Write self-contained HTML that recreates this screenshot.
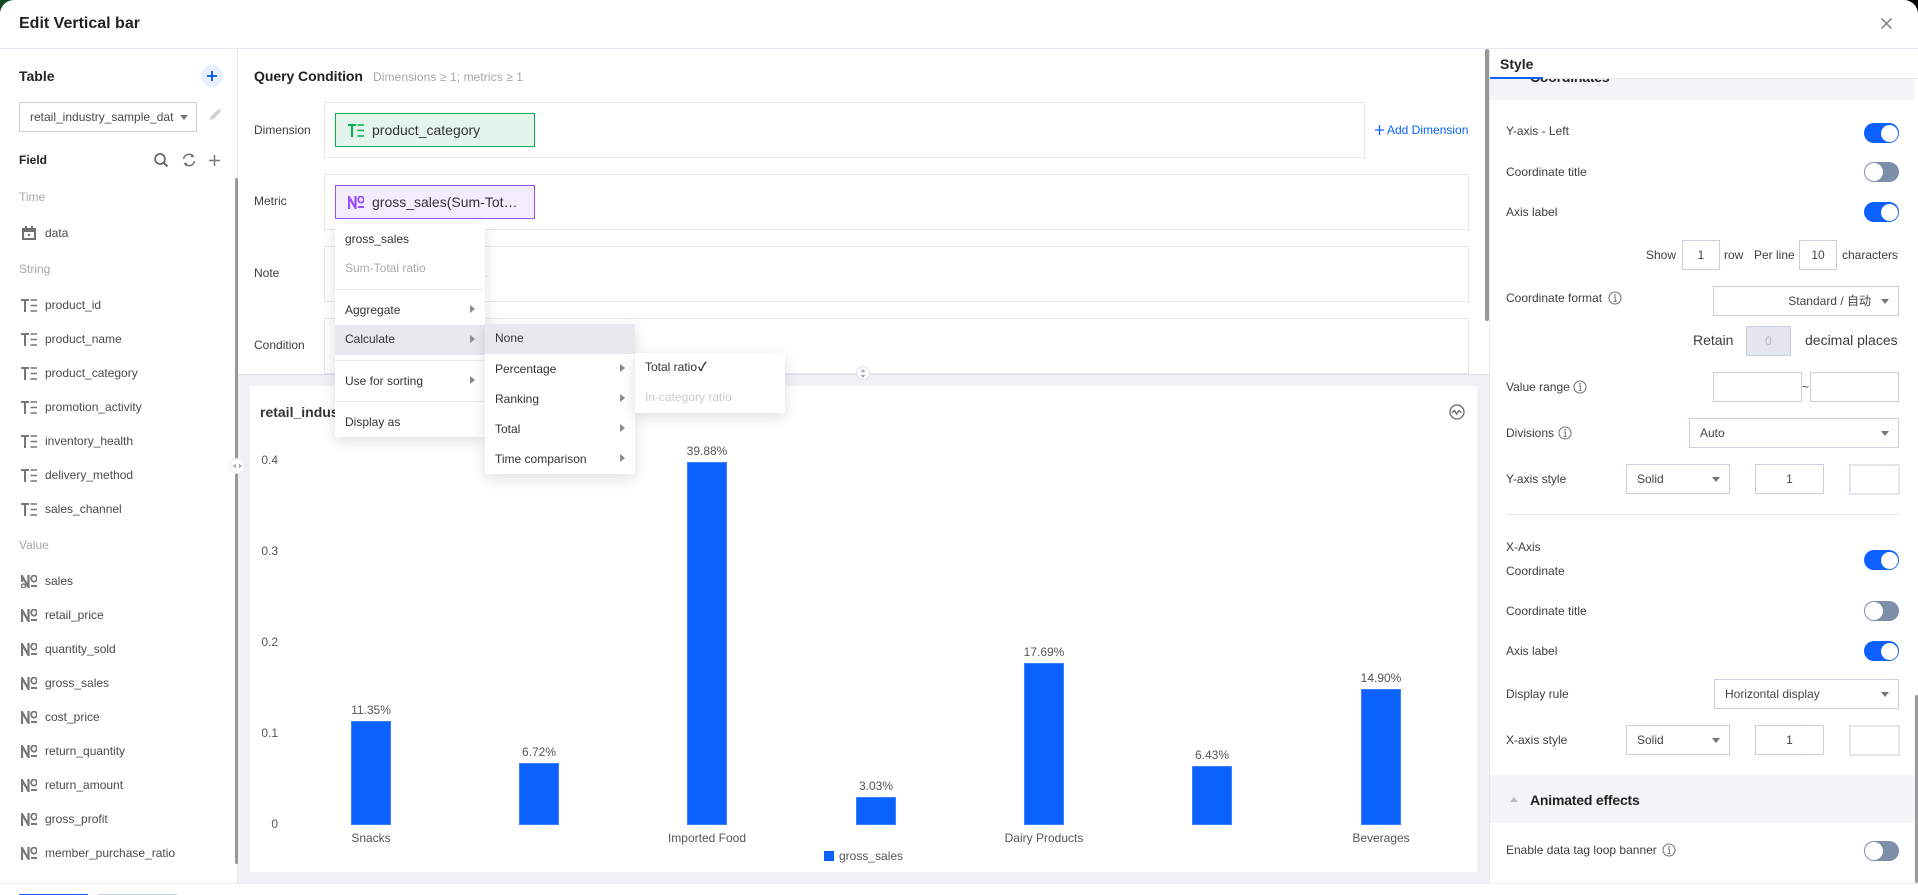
<!DOCTYPE html>
<html lang="en">
<head>
<meta charset="utf-8">
<title>Edit Vertical bar</title>
<style>
html,body{margin:0;padding:0;width:1918px;height:895px;overflow:hidden;background:#fff}
body{position:relative;font-family:"Liberation Sans","Noto Sans CJK SC",sans-serif;font-size:12px;color:#333}
.a{position:absolute;box-sizing:border-box}
.t{position:absolute;white-space:nowrap;line-height:16px;font-size:12px;color:#3d3d3d}
.b{font-weight:700;color:#222}
.g{color:#a8a8a8}
.f{color:#4a4a4a}
.box{position:absolute;box-sizing:border-box;border:1px solid #e6e8ef;background:#fff}
.inp{position:absolute;box-sizing:border-box;border:1px solid #c9cfdc;background:#fff;text-align:center;line-height:28px;font-size:12px;color:#444}
.sel{position:absolute;box-sizing:border-box;border:1px solid #c9cfdc;background:#fff;line-height:28px;font-size:12px;color:#444;padding-left:10px;white-space:nowrap}
.sel:after{content:"";position:absolute;right:9px;top:12px;border-left:4px solid transparent;border-right:4px solid transparent;border-top:5px solid #777}
.cb{position:absolute;box-sizing:border-box;border:2px solid #e4e6ed;background:#fff}
.tg{position:absolute;width:35px;height:20px;border-radius:10px;background:#0b60ff;left:1864px}
.tg:after{content:"";position:absolute;left:17px;top:1.5px;width:17px;height:17px;border-radius:50%;background:#fff}
.tg.off{background:#7d8ea8}
.tg.off:after{left:1px;top:1px;width:18px;height:18px}
.menu{position:absolute;background:#fff;box-shadow:0 4px 14px rgba(0,0,0,.13)}
.mi{position:absolute;left:0;right:0;height:30px;line-height:30px;padding-left:10px;font-size:12px;color:#333;box-sizing:border-box;white-space:nowrap}
.mi.u{line-height:29px}
.mi.h{background:#e7e9ee;line-height:29px}
.mi.ar:after{content:"";position:absolute;right:10px;top:10px;border-top:4px solid transparent;border-bottom:4px solid transparent;border-left:5px solid #8a8a8a}
.ln{position:absolute;left:0;right:0;height:1px;background:#e9ebf1}
.bar{position:absolute;width:40px;background:#0b62ff;box-shadow:inset 0 0 0 1px #3a80ff}
.lb{position:absolute;width:120px;text-align:center;line-height:16px;font-size:12px;color:#555;white-space:nowrap}
.ax{position:absolute;width:30px;text-align:right;left:248px;line-height:16px;font-size:12px;color:#555}
svg{position:absolute;overflow:visible}
</style>
</head>
<body>
<svg width="0" height="0" style="position:absolute">
<defs>
<symbol id="te" viewBox="0 0 16 13"><path d="M0 1h8M4 1v12" fill="none" stroke="currentColor" stroke-width="2"/><path d="M9.500 1h6.500M9.500 6.500h6.500M9.500 12h6.500" fill="none" stroke="currentColor" stroke-width="1.600"/></symbol>
<symbol id="no" viewBox="0 0 16 13"><path d="M1 13V1l6.500 11V0" fill="none" stroke="currentColor" stroke-width="2.200"/><ellipse cx="13" cy="3.600" rx="2.800" ry="3.100" fill="none" stroke="currentColor" stroke-width="1.800"/><path d="M10 11h6" stroke="currentColor" stroke-width="2"/></symbol>
<symbol id="nos" viewBox="0 0 16 13"><path d="M1 7V1l6.500 11V0" fill="none" stroke="currentColor" stroke-width="2.200"/><circle cx="2.500" cy="11" r="2" fill="none" stroke="currentColor" stroke-width="1.500"/><ellipse cx="13" cy="3.600" rx="2.800" ry="3.100" fill="none" stroke="currentColor" stroke-width="1.800"/><path d="M10 11h6" stroke="currentColor" stroke-width="2"/></symbol>
<symbol id="info" viewBox="0 0 14 14"><circle cx="7" cy="7" r="6" fill="none" stroke="#777" stroke-width="1.100"/><path d="M5.800 6h1.500v4.200M5.600 10.400h3.200" fill="none" stroke="#777" stroke-width="1"/><circle cx="7" cy="3.900" r=".9" fill="#777"/></symbol>
</defs>
</svg>

<!-- corners -->
<svg style="left:0;top:0" width="14" height="14"><path d="M0 0h14A14 14 0 0 0 0 14z" fill="#0b4a22"/></svg>
<svg style="left:1904px;top:0" width="14" height="14"><path d="M0 0h14v14A14 14 0 0 0 0 0z" fill="#000"/></svg>

<!-- header -->
<div class="t" style="left:19px;top:14px;font-size:16px;line-height:20px;font-weight:700;color:#222">Edit Vertical bar</div>
<svg style="left:1880px;top:17px" width="13" height="13"><path d="M1.500 1.500l10 10M11.500 1.500l-10 10" stroke="#7f7f7f" stroke-width="1.500"/></svg>
<div class="a" style="left:0;top:48px;width:1918px;height:1px;background:#e6e9f2"></div>

<!-- left panel -->
<div class="a" style="left:237px;top:49px;width:1px;height:834px;background:#e6e8ef"></div>
<div class="a" style="left:235px;top:178px;width:3px;height:686px;background:#999;border-radius:2px"></div>
<div class="t b" style="left:19px;top:68px;font-size:14px">Table</div>
<div class="a" style="left:201px;top:65px;width:22px;height:22px;border-radius:50%;background:#e8effc"></div>
<svg style="left:207px;top:71px" width="10" height="10"><path d="M5 0v10M0 5h10" stroke="#0052d9" stroke-width="1.800"/></svg>
<div class="a" style="left:19px;top:102px;width:178px;height:30px;border:1px solid #c9cfdc"></div>
<div class="t f" style="left:30px;top:109px;width:144px;overflow:hidden">retail_industry_sample_data</div>
<div class="a" style="left:180px;top:115px;border-left:4px solid transparent;border-right:4px solid transparent;border-top:5px solid #777"></div>
<svg style="left:209px;top:108px" width="13" height="13"><path d="M1 12l1-3.500 6.500-6.500 2.500 2.500L4.500 11z" fill="#ccc"/><path d="M9.500 1.200l2.300 2.300" stroke="#ccc" stroke-width="1.500"/></svg>
<div class="t b" style="left:19px;top:152px">Field</div>
<svg style="left:154px;top:153px" width="14" height="14"><circle cx="6" cy="6" r="5" fill="none" stroke="#666" stroke-width="1.700"/><path d="M9.500 9.500l4 4" stroke="#666" stroke-width="2"/></svg>
<svg style="left:182px;top:153px" width="14" height="14"><path d="M1.500 6A5.600 5.600 0 0 1 11 3M12.500 8A5.600 5.600 0 0 1 3 11" fill="none" stroke="#777" stroke-width="1.500"/><path d="M10 .5l2.500 3.500-4 .3zM4 13.500L1.500 10l4-.3z" fill="#777"/></svg>
<svg style="left:209px;top:155px" width="11" height="11"><path d="M5.500 0v11M0 5.500h11" stroke="#777" stroke-width="1.500"/></svg>

<div class="t g" style="left:19px;top:189px">Time</div>
<svg style="left:22px;top:226px" width="14" height="14"><path d="M0 2h14v12H0z" fill="#6f6f6f"/><path d="M2 6h10v6H2z" fill="#fff"/><path d="M3 0h2v3H3zM9 0h2v3H9z" fill="#6f6f6f"/><path d="M6 8h2.200v2H6z" fill="#6f6f6f"/></svg>
<div class="t f" style="left:45px;top:225px">data</div>
<div class="t g" style="left:19px;top:261px">String</div>

<svg style="left:21px;top:299px;color:#777" width="16" height="13"><use href="#te"/></svg><div class="t f" style="left:45px;top:297px">product_id</div>
<svg style="left:21px;top:333px;color:#777" width="16" height="13"><use href="#te"/></svg><div class="t f" style="left:45px;top:331px">product_name</div>
<svg style="left:21px;top:367px;color:#777" width="16" height="13"><use href="#te"/></svg><div class="t f" style="left:45px;top:365px">product_category</div>
<svg style="left:21px;top:401px;color:#777" width="16" height="13"><use href="#te"/></svg><div class="t f" style="left:45px;top:399px">promotion_activity</div>
<svg style="left:21px;top:435px;color:#777" width="16" height="13"><use href="#te"/></svg><div class="t f" style="left:45px;top:433px">inventory_health</div>
<svg style="left:21px;top:469px;color:#777" width="16" height="13"><use href="#te"/></svg><div class="t f" style="left:45px;top:467px">delivery_method</div>
<svg style="left:21px;top:503px;color:#777" width="16" height="13"><use href="#te"/></svg><div class="t f" style="left:45px;top:501px">sales_channel</div>

<div class="t g" style="left:19px;top:537px">Value</div>
<svg style="left:21px;top:575px;color:#777" width="16" height="13"><use href="#nos"/></svg><div class="t f" style="left:45px;top:573px">sales</div>
<svg style="left:21px;top:609px;color:#777" width="16" height="13"><use href="#no"/></svg><div class="t f" style="left:45px;top:607px">retail_price</div>
<svg style="left:21px;top:643px;color:#777" width="16" height="13"><use href="#no"/></svg><div class="t f" style="left:45px;top:641px">quantity_sold</div>
<svg style="left:21px;top:677px;color:#777" width="16" height="13"><use href="#no"/></svg><div class="t f" style="left:45px;top:675px">gross_sales</div>
<svg style="left:21px;top:711px;color:#777" width="16" height="13"><use href="#no"/></svg><div class="t f" style="left:45px;top:709px">cost_price</div>
<svg style="left:21px;top:745px;color:#777" width="16" height="13"><use href="#no"/></svg><div class="t f" style="left:45px;top:743px">return_quantity</div>
<svg style="left:21px;top:779px;color:#777" width="16" height="13"><use href="#no"/></svg><div class="t f" style="left:45px;top:777px">return_amount</div>
<svg style="left:21px;top:813px;color:#777" width="16" height="13"><use href="#no"/></svg><div class="t f" style="left:45px;top:811px">gross_profit</div>
<svg style="left:21px;top:847px;color:#777" width="16" height="13"><use href="#no"/></svg><div class="t f" style="left:45px;top:845px">member_purchase_ratio</div>

<!-- footer -->
<div class="a" style="left:0;top:883px;width:1918px;height:1px;background:#eeeff3"></div>
<div class="a" style="left:19px;top:894px;width:69px;height:1px;background:#0b62ff"></div>
<div class="a" style="left:98px;top:894px;width:79px;height:1px;background:#c9cfdc"></div>

<!-- query -->
<div class="t b" style="left:254px;top:68px;font-size:14px;letter-spacing:-.05px">Query Condition</div>
<div class="t g" style="left:373px;top:69px;letter-spacing:.08px">Dimensions ≥ 1; metrics ≥ 1</div>
<div class="t" style="left:254px;top:122px">Dimension</div>
<div class="t" style="left:254px;top:193px">Metric</div>
<div class="t" style="left:254px;top:265px">Note</div>
<div class="t" style="left:254px;top:337px">Condition</div>
<div class="box" style="left:324px;top:102px;width:1041px;height:56px"></div>
<div class="box" style="left:324px;top:174px;width:1145px;height:56px"></div>
<div class="box" style="left:324px;top:246px;width:1145px;height:56px"></div>
<div class="box" style="left:324px;top:318px;width:1145px;height:56px"></div>
<div class="a" style="left:335px;top:113px;width:200px;height:34px;background:#e3f4ea;border:1px solid #00b050"></div>
<svg style="left:348px;top:124px;color:#00b050" width="16" height="13"><use href="#te"/></svg>
<div class="t" style="left:372px;top:122px;font-size:14px;color:#333">product_category</div>
<div class="a" style="left:335px;top:185px;width:200px;height:34px;background:#f4ecff;border:1px solid #9a4eff"></div>
<svg style="left:348px;top:196px;color:#9a4eff" width="16" height="13"><use href="#no"/></svg>
<div class="t" style="left:372px;top:194px;font-size:14px;color:#333">gross_sales(Sum-Tot…</div>
<div class="a" style="left:486px;top:276px;width:1px;height:1px;background:#bbb"></div>
<svg style="left:1375px;top:125px" width="9" height="10"><path d="M4.500 0v10M0 5h9" stroke="#0b62ff" stroke-width="1.300"/></svg>
<div class="t" style="left:1387px;top:122px;color:#0b62ff">Add Dimension</div>
<div class="a" style="left:1485px;top:49px;width:4px;height:272px;background:#999;border-radius:2px"></div>

<!-- chart panel -->
<div class="a" style="left:238px;top:374px;width:1251px;height:509px;background:#f0f1f5;border-top:1px solid #dcdfe6"></div>
<div class="a" style="left:250px;top:386px;width:1227px;height:486px;background:#fff"></div>
<div class="t" style="left:260px;top:404px;font-size:14px;font-weight:700;color:#333">retail_industry_sample_data</div>
<svg style="left:1449px;top:404px" width="16" height="16"><circle cx="8" cy="8" r="7" fill="none" stroke="#666" stroke-width="1.300"/><path d="M3 8.500l2.500-2 2 3.500 2.500-3.500 2.500 2" fill="none" stroke="#666" stroke-width="1.300"/></svg>
<div class="a" style="left:856px;top:366px;width:14px;height:14px;border-radius:50%;background:#fff;border:1px solid #dfe2e8"></div>
<svg style="left:860px;top:369px" width="6" height="9"><path d="M3 0l2.500 3h-5zM3 9L.5 6h5z" fill="#aaa"/></svg>
<div class="a" style="left:229px;top:458px;width:16px;height:16px;border-radius:50%;background:#fff;border:1px solid #e6e8ef"></div>
<svg style="left:233px;top:463px" width="9" height="6"><path d="M0 3l3-2.500v5zM9 3L6 .5v5z" fill="#aaa"/></svg>

<div class="ax" style="top:452px">0.4</div>
<div class="ax" style="top:543px">0.3</div>
<div class="ax" style="top:634px">0.2</div>
<div class="ax" style="top:725px">0.1</div>
<div class="ax" style="top:816px">0</div>

<div class="bar" style="left:351px;top:721px;height:104px"></div>
<div class="bar" style="left:519px;top:763px;height:62px"></div>
<div class="bar" style="left:687px;top:462px;height:363px"></div>
<div class="bar" style="left:856px;top:797px;height:28px"></div>
<div class="bar" style="left:1024px;top:663px;height:162px"></div>
<div class="bar" style="left:1192px;top:766px;height:59px"></div>
<div class="bar" style="left:1361px;top:689px;height:136px"></div>

<div class="lb" style="left:311px;top:702px">11.35%</div>
<div class="lb" style="left:479px;top:744px">6.72%</div>
<div class="lb" style="left:647px;top:443px">39.88%</div>
<div class="lb" style="left:816px;top:778px">3.03%</div>
<div class="lb" style="left:984px;top:644px">17.69%</div>
<div class="lb" style="left:1152px;top:747px">6.43%</div>
<div class="lb" style="left:1321px;top:670px">14.90%</div>

<div class="lb" style="left:311px;top:830px">Snacks</div>
<div class="lb" style="left:647px;top:830px">Imported Food</div>
<div class="lb" style="left:984px;top:830px">Dairy Products</div>
<div class="lb" style="left:1321px;top:830px">Beverages</div>

<div class="a" style="left:824px;top:851px;width:10px;height:10px;background:#0b62ff"></div>
<div class="t" style="left:839px;top:848px;color:#555">gross_sales</div>

<!-- right panel -->
<div class="a" style="left:1489px;top:49px;width:1px;height:834px;background:#e6e8ef"></div>
<div class="a" style="left:1490px;top:52px;width:425px;height:48px;background:#f4f5f7"></div>
<div class="t" style="left:1530px;top:69px;font-size:14px;font-weight:700;color:#222;letter-spacing:-.2px">Coordinates</div>
<div class="a" style="left:1490px;top:49px;width:428px;height:29px;background:#fff"></div>
<div class="t" style="left:1500px;top:56px;font-size:14px;font-weight:700;color:#222">Style</div>
<div class="a" style="left:1490px;top:78px;width:428px;height:1px;background:#e6e8ef"></div>
<div class="a" style="left:1490px;top:77px;width:53px;height:2px;background:#0b62ff"></div>

<div class="t" style="left:1506px;top:123px">Y-axis - Left</div><div class="tg" style="top:123px"></div>
<div class="t" style="left:1506px;top:164px">Coordinate title</div><div class="tg off" style="top:162px"></div>
<div class="t" style="left:1506px;top:204px">Axis label</div><div class="tg" style="top:202px"></div>

<div class="t" style="left:1646px;top:247px">Show</div>
<div class="inp" style="left:1682px;top:240px;width:38px;height:30px">1</div>
<div class="t" style="left:1724px;top:247px">row</div>
<div class="t" style="left:1754px;top:247px">Per line</div>
<div class="inp" style="left:1799px;top:240px;width:38px;height:30px">10</div>
<div class="t" style="left:1842px;top:247px">characters</div>

<div class="t" style="left:1506px;top:290px">Coordinate format</div>
<svg style="left:1608px;top:291px" width="14" height="14"><use href="#info"/></svg>
<div class="sel" style="left:1713px;top:286px;width:186px;height:30px;padding:0 27px 0 0;text-align:right">Standard / 自动</div>

<div class="t" style="left:1693px;top:332px;font-size:14px">Retain</div>
<div class="inp" style="left:1746px;top:326px;width:45px;height:30px;background:#e3e6ee;color:#b5b5b5">0</div>
<div class="t" style="left:1805px;top:332px;font-size:14px">decimal places</div>

<div class="t" style="left:1506px;top:379px">Value range</div>
<svg style="left:1573px;top:380px" width="14" height="14"><use href="#info"/></svg>
<div class="inp" style="left:1713px;top:372px;width:89px;height:30px"></div>
<div class="t" style="left:1802px;top:379px">~</div>
<div class="inp" style="left:1810px;top:372px;width:89px;height:30px"></div>

<div class="t" style="left:1506px;top:425px">Divisions</div>
<svg style="left:1558px;top:426px" width="14" height="14"><use href="#info"/></svg>
<div class="sel" style="left:1689px;top:418px;width:210px;height:30px">Auto</div>

<div class="t" style="left:1506px;top:471px">Y-axis style</div>
<div class="sel" style="left:1626px;top:464px;width:104px;height:30px">Solid</div>
<div class="inp" style="left:1755px;top:464px;width:69px;height:30px">1</div>
<div class="cb" style="left:1849px;top:464px;width:51px;height:31px"></div>

<div class="a" style="left:1506px;top:514px;width:393px;height:1px;background:#e6e8ef"></div>

<div class="t" style="left:1506px;top:539px">X-Axis</div>
<div class="t" style="left:1506px;top:563px">Coordinate</div>
<div class="tg" style="top:550px"></div>
<div class="t" style="left:1506px;top:603px">Coordinate title</div><div class="tg off" style="top:601px"></div>
<div class="t" style="left:1506px;top:643px">Axis label</div><div class="tg" style="top:641px"></div>

<div class="t" style="left:1506px;top:686px">Display rule</div>
<div class="sel" style="left:1714px;top:679px;width:185px;height:30px">Horizontal display</div>

<div class="t" style="left:1506px;top:732px">X-axis style</div>
<div class="sel" style="left:1626px;top:725px;width:104px;height:30px">Solid</div>
<div class="inp" style="left:1755px;top:725px;width:69px;height:30px">1</div>
<div class="cb" style="left:1849px;top:725px;width:51px;height:31px"></div>

<div class="a" style="left:1490px;top:775px;width:425px;height:48px;background:#f4f5f7"></div>
<div class="a" style="left:1510px;top:797px;border-left:4px solid transparent;border-right:4px solid transparent;border-bottom:5px solid #bbb"></div>
<div class="t" style="left:1530px;top:792px;font-size:14px;font-weight:700;color:#222;letter-spacing:-.2px">Animated effects</div>

<div class="t" style="left:1506px;top:842px">Enable data tag loop banner</div>
<svg style="left:1662px;top:843px" width="14" height="14"><use href="#info"/></svg>
<div class="tg off" style="top:841px"></div>

<div class="a" style="left:1915px;top:695px;width:3px;height:188px;background:#999;border-radius:2px"></div>

<!-- context menus -->
<div class="menu" style="left:335px;top:224px;width:150px;height:213px">
  <div class="mi" style="top:0">gross_sales</div>
  <div class="mi u" style="top:30px;color:#aaa">Sum-Total ratio</div>
  <div class="ln" style="top:65px"></div>
  <div class="mi ar" style="top:71px">Aggregate</div>
  <div class="mi ar h" style="top:101px">Calculate</div>
  <div class="ln" style="top:136px"></div>
  <div class="mi ar" style="top:142px">Use for sorting</div>
  <div class="ln" style="top:177px"></div>
  <div class="mi" style="top:183px">Display as</div>
</div>
<div class="menu" style="left:485px;top:324px;width:150px;height:150px">
  <div class="mi h" style="top:0">None</div>
  <div class="mi ar" style="top:30px">Percentage</div>
  <div class="mi ar" style="top:60px">Ranking</div>
  <div class="mi ar" style="top:90px">Total</div>
  <div class="mi ar" style="top:120px">Time comparison</div>
</div>
<div class="menu" style="left:635px;top:353px;width:150px;height:60px">
  <div class="mi u" style="top:0">Total ratio<b style="margin-left:1px">✓</b></div>
  <div class="mi u" style="top:30px;color:#ccc">In-category ratio</div>
</div>
</body>
</html>
